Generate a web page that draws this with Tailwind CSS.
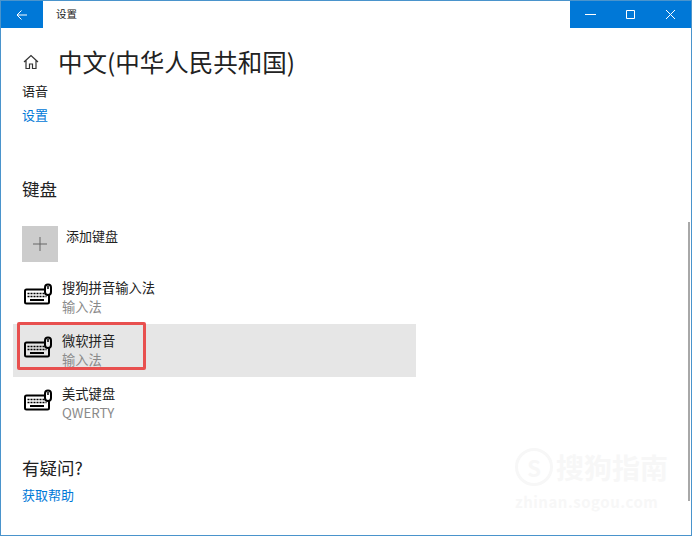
<!DOCTYPE html>
<html lang="zh-CN">
<head>
    <meta charset="UTF-8">
    <title>设置</title>
    <script src="https://cdn.jsdelivr.net/npm/@tailwindcss/browser@4"></script>
</head>
<body class="bg-white overflow-hidden font-['Noto_Sans_CJK_SC','Noto_Sans',sans-serif]">
    <div class="relative w-[692px] h-[536px] border border-[#4a94cc] bg-white text-[#222] overflow-hidden">
        <!-- 标题栏 -->
        <div class="flex items-center h-[27px] bg-white">
            <div class="flex items-center justify-center w-[42px] h-full bg-[#0078d7]">
                <svg class="w-3 h-3" viewBox="0 0 12 12" fill="none" stroke="#fff" stroke-width="1">
                    <path d="M1 6h10M5.500 1.500 1 6l4.500 4.500"/>
                </svg>
            </div>
            <span class="ml-[13px] text-[10.500px] leading-none">设置</span>
            <div class="flex ml-auto h-full bg-[#0078d7] w-[121px]">
                <div class="flex-1 flex items-center justify-center">
                    <svg class="w-[11px] h-[11px]" viewBox="0 0 11 11" stroke="#fff"><path d="M0 5.500h11"/></svg>
                </div>
                <div class="flex-1 flex items-center justify-center">
                    <svg class="w-[11px] h-[11px]" viewBox="0 0 11 11" fill="none" stroke="#fff"><path d="M1.500 1.500h8v8h-8z"/></svg>
                </div>
                <div class="flex-1 flex items-center justify-center">
                    <svg class="w-[11px] h-[11px]" viewBox="0 0 11 11" stroke="#fff"><path d="M1 1l9 9M10 1l-9 9"/></svg>
                </div>
            </div>
        </div>

        <!-- 页面头部 -->
        <div class="flex items-center mt-[17px] ml-[22px] h-[34px]">
            <svg class="w-4 h-4" viewBox="0 0 16 16" fill="none" stroke="#333" stroke-width="1.200">
                <path d="M1 8 8 1.500 15 8M3 6.500V14.500h3.500V10h3v4.500H13V6.500"/>
            </svg>
            <h1 class="ml-[19px] text-[24.500px] leading-none">中文(中华人民共和国)</h1>
        </div>
        <p class="ml-[21px] mt-[2px] text-[13px] leading-[20px]">语音</p>
        <a class="block ml-[21px] mt-[4px] text-[13px] leading-[20px] text-[#0078d7]">设置</a>

        <!-- 键盘 -->
        <h2 class="ml-[21px] mt-[52px] text-[17.500px] leading-[24px]">键盘</h2>
        <div class="flex ml-[21px] mt-[25px] h-[36px]">
            <div class="flex items-center justify-center w-[36px] h-[36px] bg-[#cccccc]">
                <svg class="w-[14px] h-[14px]" viewBox="0 0 14 14" stroke="#666" stroke-width="1"><path d="M7 0v14M0 7h14"/></svg>
            </div>
            <span class="ml-[8px] text-[13px] leading-[20px]">添加键盘</span>
        </div>

        <div class="mt-[9px] ml-[12px] w-[403px]">
            <div class="flex items-center h-[53px] pl-[10px]">
                <svg class="w-[30px] h-[30px] shrink-0" viewBox="0 0 30 30" fill="none" stroke="#000">
                    <rect x="2" y="6.500" width="24" height="14" rx="1.500" stroke-width="2" fill="#fff"/>
                    <path d="M4.500 10.500h19M4.500 13.500h19" stroke-width="1.500" stroke-dasharray="2 1"/>
                    <path d="M7 17h14" stroke-width="2"/>
                    <rect x="22" y="1.500" width="6" height="10.500" rx="3" stroke-width="2" fill="#fff"/>
                    <path d="M25 3v3" stroke-width="1.500"/>
                </svg>
                <div class="ml-[9px] -mt-[1px]">
                    <p class="text-[13.300px] leading-[18px]">搜狗拼音输入法</p>
                    <p class="text-[13.300px] leading-[18px] mt-[1px] text-[#8a8a8a]">输入法</p>
                </div>
            </div>
            <div class="flex items-center h-[53px] pl-[10px] bg-[#e6e6e6]">
                <svg class="w-[30px] h-[30px] shrink-0" viewBox="0 0 30 30" fill="none" stroke="#000">
                    <rect x="2" y="6.500" width="24" height="14" rx="1.500" stroke-width="2" fill="#e6e6e6"/>
                    <path d="M4.500 10.500h19M4.500 13.500h19" stroke-width="1.500" stroke-dasharray="2 1"/>
                    <path d="M7 17h14" stroke-width="2"/>
                    <rect x="22" y="1.500" width="6" height="10.500" rx="3" stroke-width="2" fill="#e6e6e6"/>
                    <path d="M25 3v3" stroke-width="1.500"/>
                </svg>
                <div class="ml-[9px] -mt-[1px]">
                    <p class="text-[13.300px] leading-[18px]">微软拼音</p>
                    <p class="text-[13.300px] leading-[18px] mt-[1px] text-[#8a8a8a]">输入法</p>
                </div>
            </div>
            <div class="flex items-center h-[53px] pl-[10px]">
                <svg class="w-[30px] h-[30px] shrink-0" viewBox="0 0 30 30" fill="none" stroke="#000">
                    <rect x="2" y="6.500" width="24" height="14" rx="1.500" stroke-width="2" fill="#fff"/>
                    <path d="M4.500 10.500h19M4.500 13.500h19" stroke-width="1.500" stroke-dasharray="2 1"/>
                    <path d="M7 17h14" stroke-width="2"/>
                    <rect x="22" y="1.500" width="6" height="10.500" rx="3" stroke-width="2" fill="#fff"/>
                    <path d="M25 3v3" stroke-width="1.500"/>
                </svg>
                <div class="ml-[9px] -mt-[1px]">
                    <p class="text-[13.300px] leading-[18px]">美式键盘</p>
                    <p class="text-[13.300px] leading-[18px] mt-[1px] text-[#8a8a8a]">QWERTY</p>
                </div>
            </div>
        </div>

        <!-- 有疑问 -->
        <h2 class="ml-[21px] mt-[26px] text-[17.500px] leading-[24px]">有疑问?</h2>
        <a class="block ml-[21px] mt-[5px] text-[13px] leading-[20px] text-[#0078d7]">获取帮助</a>

        <!-- 滚动条 -->
        <div class="absolute left-[687px] top-[221px] w-[2px] h-[279px] bg-[#a8a8a8]"></div>

        <!-- 红框标注 -->
        <div class="absolute left-[16px] top-[321px] w-[129px] h-[48px] border-[3px] border-[#e8504f] rounded-[2px]"></div>

        <!-- 水印 -->
        <div class="absolute left-[514px] top-[447px] w-[156px] text-[#f7f7f7]">
            <div class="flex items-center">
                <div class="flex items-center justify-center shrink-0 w-[38px] h-[38px] rounded-full border-[3px] border-[#f7f7f7] text-[22px] font-bold leading-none">S</div>
                <span class="ml-[3px] text-[28px] leading-[38px] font-bold whitespace-nowrap">搜狗指南</span>
            </div>
            <p class="text-[15px] leading-[18px] mt-[7px] font-bold tracking-[0.5px] whitespace-nowrap">zhinan.sogou.com</p>
        </div>
    </div>
</body>
</html>
